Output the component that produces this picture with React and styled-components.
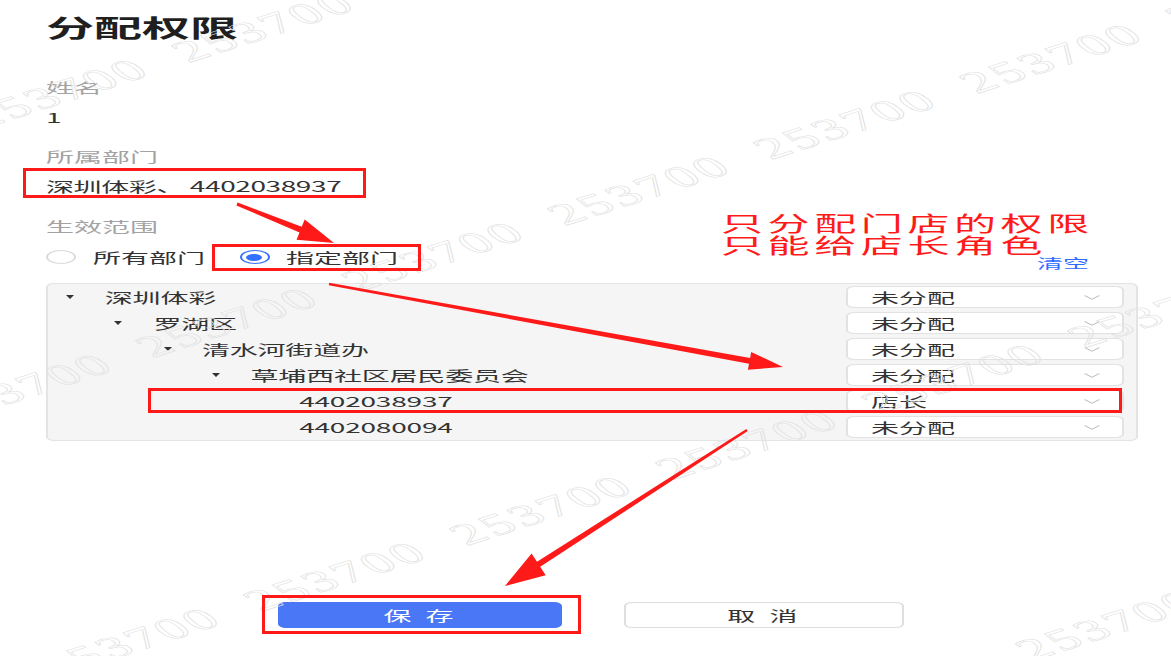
import React from "react";
import styled, { createGlobalStyle } from "styled-components";

const GlobalStyle = createGlobalStyle`
  html, body { margin: 0; padding: 0; background: #fff; overflow: hidden; }
  * { box-sizing: border-box; }
`;

const Screen = styled.div`
  position: relative;
  width: 1171px;
  height: 656px;
  overflow: hidden;
  background: #fff;
`;

const Canvas = styled.div`
  position: relative;
  width: 585.5px;
  height: 656px;
  padding: 11px 17px 0 23px;
  transform: scaleX(2);
  transform-origin: 0 0;
  font-family: "Noto Sans CJK SC", "Noto Sans", sans-serif;
  display: flex;
  flex-direction: column;
`;

const Title = styled.h1`
  margin: 0;
  font-size: 24px;
  line-height: 32px;
  font-weight: 700;
  color: #1f1f1f;
`;

const Field = styled.div`
  display: flex;
  flex-direction: column;
  gap: 10px;
  margin-top: ${(p) => p.$top}px;
`;

const Label = styled.div`
  font-size: 14px;
  line-height: 20px;
  color: #a3a3a3;
`;

const Value = styled.div`
  font-size: 14px;
  line-height: 20px;
  color: #333;
  letter-spacing: -0.2px;
`;

const ScopeRow = styled.div`
  margin-top: 7px;
  height: 28px;
  display: flex;
  align-items: flex-end;
  justify-content: space-between;
`;

const RadioGroup = styled.div`
  height: 28px;
  display: flex;
  align-items: center;
  gap: 17px;
`;

const RadioItem = styled.label`
  display: flex;
  align-items: center;
  gap: 8.5px;
  font-size: 14px;
  line-height: 20px;
  color: #333;
`;

const RadioDot = styled.span`
  width: 15px;
  height: 14px;
  border-radius: 50%;
  border: ${(p) => (p.$checked ? "1.3px solid #3370ff" : "1px solid #dadada")};
  background: #fff;
  display: flex;
  align-items: center;
  justify-content: center;
  &::after {
    content: "";
    display: ${(p) => (p.$checked ? "block" : "none")};
    width: 8px;
    height: 7px;
    border-radius: 50%;
    background: #3370ff;
  }
`;

const ClearLink = styled.a`
  font-size: 13px;
  line-height: 16px;
  color: #2f6bff;
  margin-right: 24px;
  cursor: pointer;
`;

const Tree = styled.div`
  margin-top: 12px;
  border: 1px solid #e4e4e4;
  border-radius: 4px;
  background: #f5f5f5;
  padding: 0 5.5px 0 0;
`;

const TreeRow = styled.div`
  height: 26px;
  display: flex;
  align-items: center;
  padding-left: ${(p) => 9 + p.$level * 24.3}px;
  font-size: 14px;
  color: #333;
`;

const CaretBox = styled.span`
  width: 19.4px;
  flex: none;
  display: flex;
  align-items: center;
`;

const Caret = styled.span`
  width: 0;
  height: 0;
  border-left: 2.8px solid transparent;
  border-right: 2.8px solid transparent;
  border-top: 4px solid #333;
`;

const NodeName = styled.span`
  line-height: 20px;
  white-space: nowrap;
  letter-spacing: -0.1px;
`;

const Select = styled.div`
  margin-left: auto;
  width: 139.5px;
  height: 22px;
  background: #fff;
  border: 1px solid #e2e2e2;
  border-radius: 4px;
  display: flex;
  align-items: center;
  justify-content: space-between;
  padding: 0 11px 0 12px;
  font-size: 14px;
  line-height: 20px;
  color: #333;
`;

const ButtonRow = styled.div`
  margin-top: 161px;
  display: flex;
  justify-content: center;
  gap: 31px;
`;

const Button = styled.button`
  width: ${(p) => (p.$primary ? 142 : 140)}px;
  height: 26px;
  border-radius: 4px;
  border: 1px solid ${(p) => (p.$primary ? "#4a77f6" : "#dedede")};
  background: ${(p) => (p.$primary ? "#4a77f6" : "#fff")};
  color: ${(p) => (p.$primary ? "#fff" : "#333")};
  font-family: "Noto Sans CJK SC", sans-serif;
  font-size: 14px;
  line-height: 20px;
  letter-spacing: 2px;
  padding: 0;
  cursor: pointer;
`;

const Note = styled.div`
  position: absolute;
  left: 360.5px;
  top: 211px;
  font-size: 21px;
  letter-spacing: 2.3px;
  color: #ff1a1a;
  white-space: nowrap;
  z-index: 3;
`;

const NoteLine = styled.div`
  height: 22px;
  line-height: 22px;
`;

const WatermarkLayer = styled.div`
  position: absolute;
  inset: 0;
  overflow: hidden;
  pointer-events: none;
  z-index: 2;
`;

const Mark = styled.span`
  position: absolute;
  font-family: "Liberation Serif", serif;
  font-size: 30px;
  letter-spacing: 2px;
  line-height: 1;
  color: transparent;
  -webkit-text-stroke: 0.5px #e0e0e0;
  white-space: nowrap;
`;

const Annotations = styled.svg`
  position: absolute;
  left: 0;
  top: 0;
  width: 1171px;
  height: 656px;
  pointer-events: none;
  z-index: 5;
`;

function arrowPoints(x1, y1, x2, y2, headLen, headW, tailW, neckW) {
  const dx = x2 - x1;
  const dy = y2 - y1;
  const len = Math.hypot(dx, dy);
  const ux = dx / len;
  const uy = dy / len;
  const nx = -uy;
  const ny = ux;
  const bx = x2 - ux * headLen;
  const by = y2 - uy * headLen;
  const p = (x, y) => `${x.toFixed(1)},${y.toFixed(1)}`;
  return [
    p(x1 + (nx * tailW) / 2, y1 + (ny * tailW) / 2),
    p(bx + (nx * neckW) / 2, by + (ny * neckW) / 2),
    p(bx + (nx * headW) / 2, by + (ny * headW) / 2),
    p(x2, y2),
    p(bx - (nx * headW) / 2, by - (ny * headW) / 2),
    p(bx - (nx * neckW) / 2, by - (ny * neckW) / 2),
    p(x1 - (nx * tailW) / 2, y1 - (ny * tailW) / 2),
  ].join(" ");
}

const bands = [
  { x0: 132, y0: 27, from: -1, to: 1 },
  { x0: 526, y0: 58, from: -1, to: 5 },
  { x0: 580, y0: 312, from: 0, to: 6 },
  { x0: 554, y0: 625, from: -1, to: 1 },
];

const marks = [];
bands.forEach((b) => {
  for (let k = b.from; k <= b.to; k++) {
    marks.push({ x: b.x0 - 103 * k, y: b.y0 + 66 * k });
  }
});

const tree = [
  { level: 0, name: "深圳体彩", caret: true, role: "未分配" },
  { level: 1, name: "罗湖区", caret: true, role: "未分配" },
  { level: 2, name: "清水河街道办", caret: true, role: "未分配" },
  { level: 3, name: "草埔西社区居民委员会", caret: true, role: "未分配" },
  { level: 4, name: "4402038937", caret: false, role: "店长" },
  { level: 4, name: "4402080094", caret: false, role: "未分配" },
];

const Chevron = () => (
  <svg width="8" height="5" viewBox="0 0 8 5">
    <path d="M0.3 0.5 L4 4.3 L7.7 0.5" fill="none" stroke="#bdbdbd" strokeWidth="0.8" />
  </svg>
);

export default function App() {
  return (
    <Screen>
      <GlobalStyle />
      <Canvas>
        <Title>分配权限</Title>
        <Field $top={34}>
          <Label>姓名</Label>
          <Value>1</Value>
        </Field>
        <Field $top={19}>
          <Label>所属部门</Label>
          <Value>深圳体彩、 4402038937</Value>
        </Field>
        <Field $top={20}>
          <Label>生效范围</Label>
        </Field>
        <ScopeRow>
          <RadioGroup>
            <RadioItem>
              <RadioDot />
              所有部门
            </RadioItem>
            <RadioItem>
              <RadioDot $checked />
              指定部门
            </RadioItem>
          </RadioGroup>
          <ClearLink>清空</ClearLink>
        </ScopeRow>
        <Tree>
          {tree.map((n) => (
            <TreeRow key={n.name} $level={n.level}>
              <CaretBox>{n.caret && <Caret />}</CaretBox>
              <NodeName>{n.name}</NodeName>
              <Select>
                <span>{n.role}</span>
                <Chevron />
              </Select>
            </TreeRow>
          ))}
        </Tree>
        <ButtonRow>
          <Button $primary>保 存</Button>
          <Button>取 消</Button>
        </ButtonRow>
        <Note>
          <NoteLine>只分配门店的权限</NoteLine>
          <NoteLine>只能给店长角色</NoteLine>
        </Note>
        <WatermarkLayer>
          {marks.map((m, i) => (
            <Mark
              key={i}
              style={{
                left: `${m.x}px`,
                top: `${m.y}px`,
                transform: "translate(-50%, -50%) rotate(-32.6deg)",
              }}
            >
              253700
            </Mark>
          ))}
        </WatermarkLayer>
      </Canvas>
      <Annotations viewBox="0 0 1171 656">
        <g fill="none" stroke="#ff1a1a" strokeWidth="3">
          <rect x="24.5" y="169.5" width="340" height="27" />
          <rect x="213.5" y="245.5" width="206" height="24" />
          <rect x="149.5" y="389.5" width="971" height="22" />
          <rect x="263.5" y="596.5" width="316" height="36" />
        </g>
        <g fill="#ff1a1a">
          <polygon points={arrowPoints(237, 204, 334, 243, 36, 22, 3, 6)} />
          <polygon points={arrowPoints(329, 284, 783, 367, 34, 18, 2.5, 6)} />
          <polygon points={arrowPoints(747, 430, 505, 586, 40, 26, 2.5, 6)} />
        </g>
      </Annotations>
    </Screen>
  );
}
